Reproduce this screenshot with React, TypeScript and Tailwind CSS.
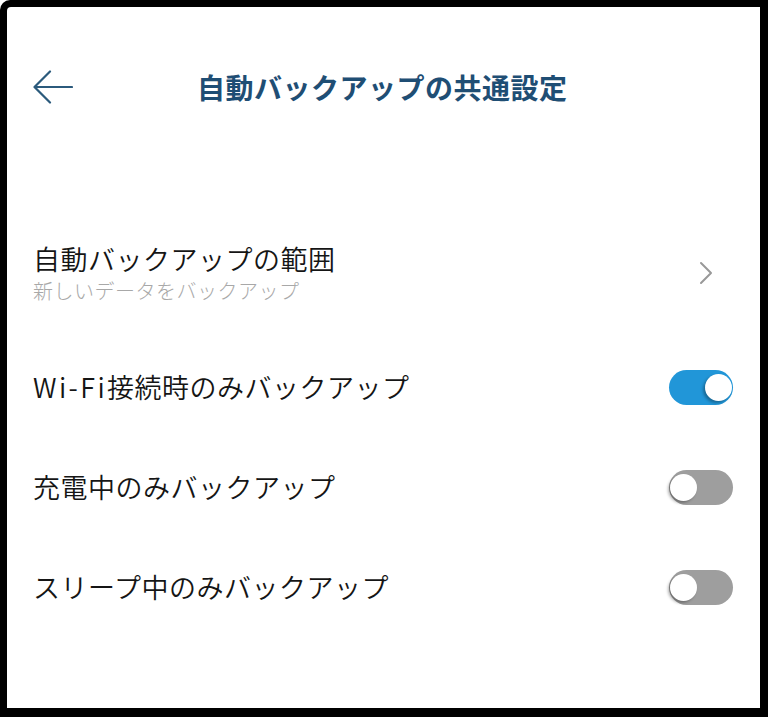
import { useState } from 'react';

type Item = { label: string; prefix?: string; on: boolean };

const font = { fontFamily: '"Noto Sans CJK JP", "Noto Sans", sans-serif' };

function Toggle({ on, onClick }: { on: boolean; onClick: () => void }) {
  return (
    <button
      onClick={onClick}
      className={`relative w-[64px] h-[35px] rounded-full shrink-0 ${on ? 'bg-[#2196d8]' : 'bg-[#9e9e9e]'}`}
    >
      <span
        className={`absolute top-[4px] w-[27px] h-[27px] rounded-full bg-white shadow-[-2px_2px_3px_rgba(0,0,0,0.3)] ${on ? 'right-[1px]' : 'left-[1px]'}`}
      />
    </button>
  );
}

export default function App() {
  const [items, setItems] = useState<Item[]>([
    { prefix: 'Wi-Fi', label: '接続時のみバックアップ', on: true },
    { label: '充電中のみバックアップ', on: false },
    { label: 'スリープ中のみバックアップ', on: false },
  ]);

  const toggle = (i: number) =>
    setItems(prev => prev.map((it, idx) => (idx === i ? { ...it, on: !it.on } : it)));

  return (
    <div className="w-[768px] h-[717px] bg-black pt-[7px] pl-[7px] pr-[8px] pb-[9px] rounded-tl-[10px]" style={font}>
      <div className="w-full h-full bg-white rounded-tl-[4px] flex flex-col">
        {/* header */}
        <div className="h-[160px] flex items-center pl-[26px] shrink-0">
          <svg width="40" height="34" viewBox="0 0 40 34" fill="none" stroke="#2b5a7c" strokeWidth="2.2" strokeLinecap="round" strokeLinejoin="round">
            <path d="M39 17H2" />
            <path d="M17 1.5L1.5 17L17 32.5" />
          </svg>
          <h1 className="ml-[124px] text-[28px] font-bold text-[#1f4e74] tracking-[0.5px]">
            自動バックアップの共通設定
          </h1>
        </div>

        {/* scope */}
        <div className="mt-[56px] h-[100px] flex items-center pl-[26px] pr-[47px]">
          <div className="flex-1 flex flex-col pt-[4px]">
            <span className="text-[27px] leading-[32px] font-[350] tracking-[0.5px] text-[#151515]">自動バックアップの範囲</span>
            <span className="text-[20px] leading-[32px] font-light tracking-[0.5px] text-[#a8a8a8]">新しいデータをバックアップ</span>
          </div>
          <svg width="14" height="24" viewBox="0 0 14 24" fill="none" stroke="#999999" strokeWidth="2" strokeLinecap="round" strokeLinejoin="round">
            <path d="M2 2L12 12L2 22" />
          </svg>
        </div>

        {/* toggles */}
        <div className="mt-[14px] flex flex-col">
          {items.map((it, i) => (
            <div key={it.label} className="h-[100px] flex items-center pl-[26px] pr-[27px]">
              <span className="flex-1 text-[27px] font-[350] tracking-[0.5px] text-[#151515]">
                {it.prefix && <span className="tracking-[2.4px]">{it.prefix}</span>}
                {it.label}
              </span>
              <Toggle on={it.on} onClick={() => toggle(i)} />
            </div>
          ))}
        </div>
      </div>
    </div>
  );
}
